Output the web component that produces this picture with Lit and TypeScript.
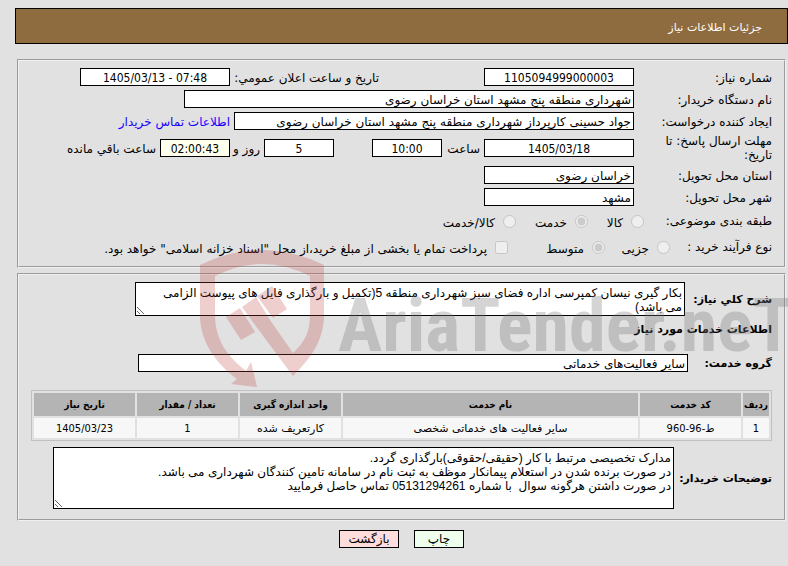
import { LitElement, html, css, svg } from "lit";
import { customElement } from "lit/decorators.js";

const columns = ["ردیف", "کد خدمت", "نام خدمت", "واحد اندازه گیری", "تعداد / مقدار", "تاریخ نیاز"];
const rows = [["1", "ط-96-960", "سایر فعالیت های خدماتی شخصی", "کارتعریف شده", "1", "1405/03/23"]];

const summary = "بکار گیری نیسان کمپرسی اداره فضای سبز شهرداری منطقه 5(تکمیل و بارگذاری فایل های پیوست الزامی می باشد)";
const notes = [
  "مدارک تخصیصی مرتبط با کار (حقیقی/حقوقی)بارگذاری گردد.",
  "در صورت برنده شدن در استعلام پیمانکار موظف به ثبت نام در سامانه تامین کنندگان شهرداری می باشد.",
  "در صورت داشتن هرگونه سوال  با شماره 05131294261 تماس حاصل فرمایید",
].join("\n");

@customElement("app-root")
export class AppRoot extends LitElement {
  static styles = css`
    :host {
      display: block;
      min-height: 100vh;
      box-sizing: border-box;
      padding: 8px 0 16px 15px;
      background: #e1e1e1;
      color: #000;
      direction: rtl;
      font: 12px/14px "DejaVu Sans", sans-serif;
      overflow: hidden;
    }
    * { box-sizing: border-box; }
    .title {
      margin: 0 0 15px;
      height: 36px;
      padding: 4px 25px 0;
      display: flex;
      align-items: center;
      border: 1px solid #000;
      background: #8f6c40;
      color: #fff;
      font-size: 11px;
      font-weight: normal;
    }
    .content { position: relative; }
    .panel {
      margin: 0 2px 5px;
      padding: 5px 12px 6px;
      border: 2px groove #f0f0f0;
      min-width: 0;
    }
    .row {
      display: flex;
      align-items: center;
      gap: 4px;
      min-height: 22px;
      white-space: nowrap;
    }
    .row.tall { min-height: 32px; }
    .row.options { min-height: 26px; gap: 0; }
    .row.options .label { width: 128px; }
    .row.options .label.process { width: 102px; }
    .label { flex: none; width: 134px; }
    .row > label, .row > a { padding-top: 2px; }
    .row > .option, .row > .wrap { padding-top: 0; }
    .wrap { white-space: normal; }
    .row > .second { flex: none; width: 246px; padding-right: 101px; }
    .box, .area {
      border: 1px solid #000;
      border-radius: 0;
      background: #fff;
      color: #000;
      font: inherit;
      margin: 0;
    }
    .box {
      height: 18px;
      min-width: 0;
      padding: 1px 2px 0;
    }
    .area {
      display: block;
      padding: 3px 2px 1px 16px;
      overflow: hidden;
      resize: both;
      font-family: "Liberation Sans", "DejaVu Sans", sans-serif;
    }
    .mid { text-align: center; }
    .w70 { width: 70px; }
    .w150 { width: 150px; }
    .w400 { width: 400px; }
    .w450 { width: 450px; }
    .w550 { width: 550px; }
    .w621 { width: 621px; }
    .timer { background: #ffffee; }
    .hour { flex: none; width: 34px; }
    .days { flex: none; width: 26px; }
    .gap { flex: none; width: 30px; }
    .num { font-family: "DejaVu Sans Condensed", "DejaVu Sans", sans-serif; }
    a { color: #1a00ff; text-decoration: none; }
    .option { flex: none; display: flex; align-items: center; gap: 8px; }
    .option input { margin: 0; width: 13px; height: 13px; }
    .option span { padding-top: 4px; }
    .c56 { width: 56px; }
    .c65 { width: 65px; }
    .c72 { width: 72px; }
    .c97 { width: 97px; }
    .detail { padding: 7px 12px 10px; }
    .strong { flex: none; font-weight: bold; font-size: 11px; }
    .strong.summary { width: 83px; }
    .strong.group { width: 80px; }
    .strong.notes { width: 94px; }
    .row.service { min-height: 38px; }
    .heading { margin: 0; height: 28px; line-height: 28px; font-size: 11px; }
    .grid {
      width: 100%;
      margin: 8px 0 6px;
      table-layout: fixed;
      border: 1px solid #c0c0c0;
      border-collapse: separate;
      border-spacing: 2px;
      font-size: 11px;
      line-height: 14px;
      text-align: center;
      white-space: nowrap;
    }
    .grid th {
      height: 23px;
      padding: 0;
      background: #b4b4b4;
      font-family: "DejaVu Sans Condensed", "DejaVu Sans", sans-serif;
      font-size: 10px;
    }
    .grid td { height: 20px; padding: 2px 0 0; background: #f7f7f7; }
    .k0 { width: 26px; }
    .k1 { width: 101px; }
    .actions { display: flex; justify-content: center; gap: 15px; margin-top: 9px; }
    .button {
      height: 18px;
      padding: 0;
      border: 1px solid #000;
      border-radius: 0;
      font: inherit;
      color: #000;
    }
    .print { width: 50px; background: #eeffee; }
    .back { width: 60px; background: #ffdddd; }
    .mark {
      position: absolute;
      top: 186px;
      right: 0;
      width: 600px;
      height: 145px;
      pointer-events: none;
      direction: ltr;
    }
    .shield { fill: rgba(190, 60, 60, 0.25); }
    .brand {
      fill: rgba(120, 120, 120, 0.32);
      font: bold 74px "Liberation Sans Narrow", "Roboto Condensed", Roboto, sans-serif;
    }
  `;

  private box(id: string, value: string, cls: string, label: string) {
    return html`<input class="box ${cls}" id=${id} .value=${value} aria-label=${label} readonly />`;
  }

  private mark() {
    return html`<svg class="mark" viewBox="188 245 600 145" aria-hidden="true">
      ${svg`
        <path class="shield" d="M200 265Q262 235 324 265V315C324 340 311 358 293 376L258 329L242 307L256 297L270 320L293 353C305 342 310 331 310 315V276Q262 252 215 276V315C215 340 228 357 246 371L251 362L257 387L231 384L237 379C214 362 200 340 200 315Z"/>
        <path class="shield" d="M226 317L240 308L255 332L241 340ZM257 296L272 286L287 309L273 318Z"/>
        <text class="brand" x="338" y="351">AriaTender.neT</text>
      `}
    </svg>`;
  }

  render() {
    return html`
      <h1 class="title">جزئیات اطلاعات نیاز</h1>
      <main class="content">
        <section class="panel">
          <div class="row">
            <label class="label" for="number">شماره نیاز:</label>
            ${this.box("number", "1105094999000003", "w150 mid num", "شماره نیاز")}
            <label class="second" for="announced">تاریخ و ساعت اعلان عمومي:</label>
            ${this.box("announced", "07:48 - 1405/03/13", "w150 mid num", "تاریخ و ساعت اعلان عمومي")}
          </div>
          <div class="row">
            <label class="label" for="buyer">نام دستگاه خریدار:</label>
            ${this.box("buyer", "شهرداری منطقه پنج مشهد استان خراسان رضوی", "w450", "نام دستگاه خریدار")}
          </div>
          <div class="row">
            <label class="label" for="creator">ایجاد کننده درخواست:</label>
            ${this.box("creator", "جواد حسینی کارپرداز شهرداری منطقه پنج مشهد استان خراسان رضوی", "w400", "ایجاد کننده درخواست")}
            <a href="#">اطلاعات تماس خریدار</a>
          </div>
          <div class="row tall">
            <label class="label wrap" for="deadline">مهلت ارسال پاسخ: تا تاریخ:</label>
            ${this.box("deadline", "1405/03/18", "w150 mid num", "تاریخ")}
            <label class="hour" for="hour">ساعت</label>
            ${this.box("hour", "10:00", "w70 mid num", "ساعت")}
            <span class="gap"></span>
            ${this.box("days", "5", "w70 mid num", "روز")}
            <label class="days" for="days">روز و</label>
            ${this.box("left", "02:00:43", "w70 mid num timer", "ساعت باقي مانده")}
            <label for="left">ساعت باقي مانده</label>
          </div>
          <div class="row">
            <label class="label" for="province">استان محل تحویل:</label>
            ${this.box("province", "خراسان رضوی", "w150", "استان محل تحویل")}
          </div>
          <div class="row">
            <label class="label" for="city">شهر محل تحویل:</label>
            ${this.box("city", "مشهد", "w150", "شهر محل تحویل")}
          </div>
          <div class="row options">
            <span class="label">طبقه بندی موضوعی:</span>
            <label class="option c56"><input type="radio" name="kind" disabled /><span>کالا</span></label>
            <label class="option c72"><input type="radio" name="kind" checked disabled /><span>خدمت</span></label>
            <label class="option"><input type="radio" name="kind" disabled /><span>کالا/خدمت</span></label>
          </div>
          <div class="row options">
            <span class="label process">نوع فرآیند خرید :</span>
            <label class="option c65"><input type="radio" name="size" disabled /><span>جزیی</span></label>
            <label class="option c97"><input type="radio" name="size" checked disabled /><span>متوسط</span></label>
            <label class="option"><input type="checkbox" disabled /><span>پرداخت تمام یا بخشی از مبلغ خرید،از محل "اسناد خزانه اسلامی" خواهد بود.</span></label>
          </div>
        </section>

        <section class="panel detail">
          <div class="row">
            <label class="strong summary" for="summary">شرح کلي نیاز:</label>
            <textarea class="area w550" id="summary" rows="2" readonly .value=${summary}></textarea>
          </div>
          <h2 class="heading">اطلاعات خدمات مورد نیاز</h2>
          <div class="row service">
            <label class="strong group" for="group">گروه خدمت:</label>
            ${this.box("group", "سایر فعالیت‌های خدماتی", "w550", "گروه خدمت")}
          </div>
          <table class="grid">
            <colgroup><col class="k0" /><col class="k1" /><col /><col class="k1" /><col class="k1" /><col class="k1" /></colgroup>
            <thead><tr>${columns.map((c) => html`<th scope="col">${c}</th>`)}</tr></thead>
            <tbody>${rows.map((r) => html`<tr>${r.map((c) => html`<td class=${/\d/.test(c) ? "num" : ""}>${c}</td>`)}</tr>`)}</tbody>
          </table>
          <div class="row">
            <label class="strong notes" for="notes">توضیحات خریدار:</label>
            <textarea class="area w621" id="notes" rows="4" readonly .value=${notes}></textarea>
          </div>
        </section>
        ${this.mark()}
      </main>
      <div class="actions">
        <button class="button print" type="button">چاپ</button>
        <button class="button back" type="button">بازگشت</button>
      </div>
    `;
  }
}
